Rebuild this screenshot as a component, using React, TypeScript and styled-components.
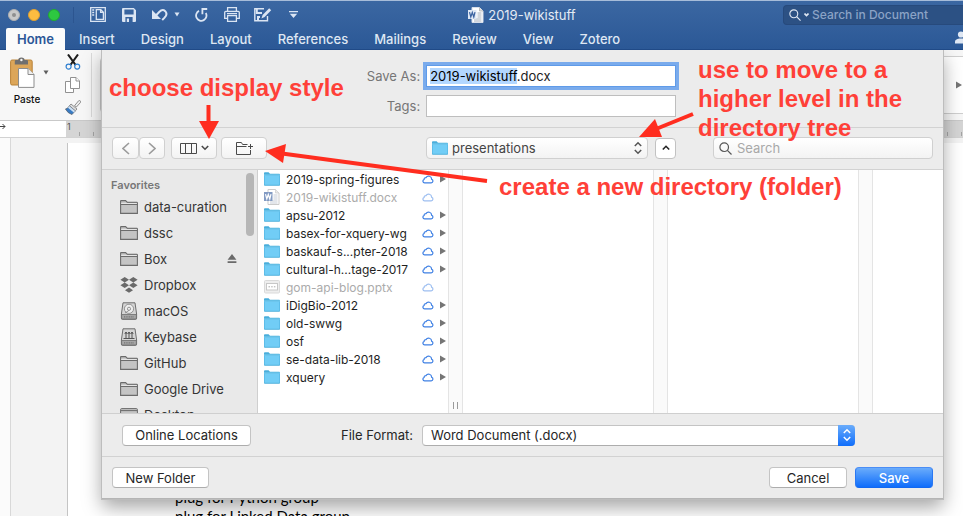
import React, { useEffect, useRef } from "react";
import styled, { createGlobalStyle, css } from "styled-components";

const GlobalStyle = createGlobalStyle`
  * { box-sizing: border-box; }
  body { margin: 0; background: #fff; font-family: Inter, "Liberation Sans", sans-serif; font-size: 13px; color: #262626; }
  button, input, select { font: inherit; color: inherit; margin: 0; }
  button { padding: 0; border: 0; background: none; }
  ul { list-style: none; margin: 0; padding: 0; }
  svg { display: block; flex: none; }
`;

/* ---------- window chrome ---------- */

const Window = styled.div`
  position: relative;
  height: 100vh;
  min-height: 516px;
  display: flex;
  flex-direction: column;
  overflow: hidden;
`;

const Header = styled.header`
  flex: none;
  border-top: 1px solid #a7bcd9;
  border-bottom: 1px solid #204a87;
  background: linear-gradient(#3b67a2, #2b5896);
  color: #dfe7f3;
`;

const TitleBar = styled.div`
  height: 27px;
  display: grid;
  grid-template-columns: minmax(0, 469fr) auto minmax(0, 388fr);
  align-items: center;
`;

const QuickTools = styled.div`
  display: flex;
  align-items: center;
  padding-left: 8px;
`;

const Light = styled.button<{ $color: string; $edge: string }>`
  width: 12px;
  height: 12px;
  margin-right: 8px;
  border-radius: 50%;
  border: 1px solid ${(p) => p.$edge};
  background: ${(p) => p.$color};
  display: grid;
  place-items: center;
`;

const LightDot = styled.span`
  width: 4px;
  height: 4px;
  border-radius: 50%;
  background: #8f8f8f;
`;

const Separator = styled.span`
  width: 1px;
  height: 16px;
  margin: 0 16px 0 5px;
  background: #2c5590;
`;

const ToolButton = styled.button<{ $gap: number }>`
  margin-right: ${(p) => p.$gap}px;
  color: #dbe5f3;
`;

const DocTitle = styled.h1`
  margin: 0;
  display: flex;
  align-items: center;
  gap: 4px;
  font-size: 13px;
  font-weight: 400;
  line-height: 16px;
  color: #e4ebf5;
`;

const DocSearch = styled.label`
  justify-self: end;
  width: 180px;
  height: 20px;
  display: flex;
  align-items: center;
  gap: 3px;
  padding-left: 5px;
  border-radius: 4px 0 0 4px;
  border: 1px solid #274a7c;
  border-right: 0;
  background: #2c5184;
`;

const DocSearchInput = styled.input`
  flex: 1;
  min-width: 0;
  border: 0;
  padding: 0;
  background: none;
  outline: 0;
  color: #dfe7f3;
  font-size: 12px;
  font-weight: 500;
  &::placeholder { color: #8ba3c6; opacity: 1; }
`;

const Tabs = styled.nav`
  height: 21px;
  display: flex;
  gap: 2px;
  padding-left: 6px;
`;

const Tab = styled.button<{ $active?: boolean }>`
  padding: 0 12px;
  font-weight: 500;
  line-height: 20px;
  color: #dfe7f3;
  ${(p) =>
    p.$active &&
    css`
      height: 22px;
      padding: 0 11px;
      background: #fbfbfb;
      color: #2b5797;
      font-weight: 600;
      border-radius: 2px 2px 0 0;
    `}
`;

const Share = styled.button`
  margin-left: auto;
  margin-right: -6px;
  padding-bottom: 2px;
`;

/* ---------- ribbon and document ---------- */

const Body = styled.div`
  position: relative;
  flex: 1;
  display: flex;
  flex-direction: column;
  background: #f3f3f3;
`;

const Ribbon = styled.div`
  flex: none;
  height: 71px;
  display: flex;
  border-bottom: 1px solid #c9c9c9;
  background: #f7f7f7;
`;

const Paste = styled.button`
  width: 54px;
  padding-top: 7px;
  display: flex;
  flex-direction: column;
  align-items: center;
  gap: 4px;
  font-size: 10px;
  font-weight: 500;
  line-height: 14px;
  color: #111;
`;

const PasteTop = styled.span`
  display: flex;
  align-items: center;
  gap: 8px;
  padding-left: 4px;
  color: #5e5e5e;
`;

const ClipTools = styled.div`
  width: 38px;
  display: flex;
  flex-direction: column;
  align-items: center;
  gap: 7px;
  padding-top: 1px;
  border-right: 1px solid #dadada;
  margin: 3px 8px 3px 0;
`;

const FontGroup = styled.div`
  flex: 1;
  margin: 7px 0;
  border: 1px solid #c8c8c8;
  border-radius: 4px;
  background: #fdfdfd;
`;

const StylesGallery = styled.div`
  flex: none;
  width: 30px;
  margin: 6px 0 6px 4px;
  display: flex;
  align-items: center;
  justify-content: flex-end;
  padding-right: 1px;
  border: 1px solid #cfcfcf;
  border-right: 0;
  background: #fff;
`;

const Ruler = styled.div`
  flex: none;
  height: 17px;
  display: flex;
  border-bottom: 1px solid #d2d2d2;
  background: #fff;
`;

const RulerStart = styled.div`
  width: 66px;
  padding-top: 1px;
`;

const RulerScale = styled.div`
  flex: 1;
  padding-left: 1px;
  font-size: 9px;
  line-height: 12px;
  color: #555;
  background: repeating-linear-gradient(90deg, transparent 0 13px, #a5a5a5 13px 14px) 0 11px / 100% 4px no-repeat, #d5d5d5;
`;

const Workspace = styled.div`
  flex: 1;
  min-height: 0;
  display: flex;
`;

const SideRuler = styled.div`
  width: 11px;
  border-right: 1px solid #d8d8d8;
  background: #fbfbfb;
`;

const Page = styled.article`
  flex: 1;
  margin: 5px 0 0 56px;
  padding: 345px 0 0 107px;
  overflow: hidden;
  border-left: 1px solid #c4c4c4;
  background: #fff;
  font-family: Lato, "Open Sans", sans-serif;
  font-size: 15px;
  line-height: 19px;
  color: #000;
`;

const Line = styled.p`
  margin: 0;
`;

/* ---------- save dialog ---------- */

const Dialog = styled.form`
  position: absolute;
  top: 0;
  left: 102px;
  right: 20px;
  display: flex;
  flex-direction: column;
  background: #ececec;
  border-bottom: 1px solid #b5b5b5;
  box-shadow: 0 0 0 1px #bdbdbd, 0 8px 18px rgba(0, 0, 0, 0.36);
  clip-path: inset(0 -40px -40px -40px);
`;

const Names = styled.div`
  display: grid;
  grid-template-columns: auto minmax(0, 250px);
  justify-content: center;
  align-items: center;
  gap: 8px 6px;
  padding: 15px 2px 10px 0;
  border-bottom: 1px solid #d2d2d2;
`;

const FieldLabel = styled.label`
  text-align: right;
  color: #767676;
`;

const Field = styled.input`
  width: 100%;
  height: 22px;
  padding: 0 3px;
  border: 1px solid #bebebe;
  border-radius: 0;
  background: #fff;
  outline: 0;
  color: #222;
  &::selection { background: #b3d7ff; color: #000; }
  &:focus { border-color: #5f9be9; box-shadow: 0 0 0 3px #7aabec; }
`;

const Toolbar = styled.div`
  display: grid;
  grid-template-columns: minmax(0, 314fr) minmax(0, 250fr) minmax(0, 257fr);
  align-items: center;
  padding: 9px 10px 10px;
  border-bottom: 1px solid #d2d2d2;
`;

const ToolGroup = styled.div`
  display: flex;
  align-items: center;
`;

const soft = css`
  height: 22px;
  border-radius: 4px;
  border: 1px solid #d0d0d0;
  background: linear-gradient(#fff, #f3f3f3);
`;

const SoftButton = styled.button<{ $width: number; $gap?: number }>`
  ${soft}
  width: ${(p) => p.$width}px;
  margin-right: ${(p) => p.$gap ?? 0}px;
  display: flex;
  align-items: center;
  justify-content: center;
  gap: 4px;
  color: #4a4a4a;
  &:disabled { color: #9b9b9b; }
`;

const PathBox = styled.div`
  ${soft}
  flex: 1;
  display: grid;
  grid-template-columns: 26px minmax(0, 1fr) 14px;
  align-items: center;
  padding-left: 5px;
  margin-right: 7px;
`;

const PlainSelect = styled.select`
  appearance: none;
  width: 100%;
  height: 20px;
  padding: 0;
  border: 0;
  outline: 0;
  background: none;
  color: #444;
  grid-row: 1;
  grid-column: 2;
`;

const PathSelect = styled(PlainSelect)`
  grid-column: 1 / -1;
  padding-left: 20px;
`;

const PathIcon = styled.span`
  grid-row: 1;
  grid-column: 1;
  pointer-events: none;
`;

const PathArrows = styled.span`
  grid-row: 1;
  grid-column: 3;
  color: #555;
  pointer-events: none;
`;

const UpButton = styled.button`
  width: 21px;
  height: 21px;
  border-radius: 4px;
  border: 1px solid #c2c2c2;
  background: #fff;
  display: grid;
  place-items: center;
`;

const FileSearch = styled.label`
  ${soft}
  justify-self: end;
  width: 220px;
  max-width: 100%;
  display: flex;
  align-items: center;
  gap: 5px;
  padding-left: 5px;
  color: #555;
`;

const FileSearchInput = styled.input`
  flex: 1;
  min-width: 0;
  border: 0;
  padding: 0;
  background: none;
  outline: 0;
  &::placeholder { color: #a8a8a8; opacity: 1; }
`;

const Browser = styled.div`
  height: 243px;
  display: flex;
  background: #fff;
`;

const Sidebar = styled.aside`
  flex: none;
  width: 156px;
  display: flex;
  overflow: hidden;
  border-right: 1px solid #cfcfcf;
  background: #e9e9e9;
`;

const Favorites = styled.section`
  flex: 1;
  min-width: 0;
`;

const SidebarHeading = styled.h2`
  margin: 0;
  padding: 8px 0 2px 9px;
  font-size: 11px;
  font-weight: 600;
  line-height: 14px;
  color: #777;
`;

const Place = styled.button`
  width: 100%;
  height: 26px;
  display: flex;
  align-items: center;
  gap: 6px;
  padding: 0 9px 0 18px;
  color: #353535;
  text-align: left;
`;

const PlaceName = styled.span`
  flex: 1;
  white-space: nowrap;
`;

const ScrollTrack = styled.div`
  width: 11px;
  padding-top: 3px;
`;

const ScrollThumb = styled.div`
  width: 8px;
  height: 63px;
  border-radius: 4px;
  background: #b6b6b6;
`;

const FileColumn = styled.ul`
  flex: none;
  width: 190px;
`;

const LastColumn = styled.div`
  flex: 1;
`;

const Divider = styled.div`
  flex: none;
  width: 15px;
  display: flex;
  align-items: flex-end;
  justify-content: center;
  padding-bottom: 4px;
  border: solid #e4e4e4;
  border-width: 0 1px;
  background: #fafafa;
`;

const FileRow = styled.button<{ $dim?: boolean }>`
  width: 100%;
  height: 18px;
  display: grid;
  grid-template-columns: 16px minmax(0, 1fr) 12px 6px;
  align-items: center;
  column-gap: 6px;
  padding: 0 2px 0 6px;
  text-align: left;
  font-size: 12px;
  color: ${(p) => (p.$dim ? "#ababab" : "#1f1f1f")};
`;

const FileName = styled.span`
  white-space: nowrap;
`;

const FormatBar = styled.div`
  height: 43px;
  display: flex;
  align-items: center;
  padding: 0 88px 0 20px;
  border-top: 1px solid #cfcfcf;
`;

const PushButton = styled.button<{ $width: number; $primary?: boolean }>`
  width: ${(p) => p.$width}px;
  height: 21px;
  border-radius: 4px;
  border: 1px solid #c4c4c4;
  border-bottom-color: #adadad;
  background: #fff;
  line-height: 18px;
  ${(p) =>
    p.$primary &&
    css`
      border-color: #4b8df5 #2a78f3 #1268f0;
      background: linear-gradient(#6aacfb, #0f6dfb);
      color: #fff;
      font-weight: 500;
    `}
`;

const FormatLabel = styled.label`
  margin-left: auto;
  margin-right: 9px;
`;

const FormatBox = styled.div`
  width: 433px;
  height: 21px;
  display: grid;
  grid-template-columns: minmax(0, 1fr) 17px;
  border: 1px solid #c4c4c4;
  border-bottom-color: #adadad;
  border-right: 0;
  border-radius: 4px;
  background: #fff;
`;

const FormatSelect = styled(PlainSelect)`
  grid-column: 1 / -1;
  height: 19px;
  padding-left: 8px;
  color: #262626;
`;

const FormatArrows = styled.span`
  grid-row: 1;
  grid-column: 2;
  margin: -1px 0;
  display: grid;
  place-items: center;
  border-radius: 0 4px 4px 0;
  background: linear-gradient(#6aacfb, #0f6dfb);
  color: #fff;
  pointer-events: none;
`;

const Actions = styled.div`
  height: 42px;
  display: flex;
  align-items: center;
  gap: 8px;
  padding: 0 10px;
  border-top: 1px solid #d2d2d2;
`;

const Spacer = styled.span`
  flex: 1;
`;

/* ---------- callouts ---------- */

const Arrows = styled.svg`
  position: absolute;
  top: 0;
  left: 0;
  pointer-events: none;
`;

const Callout = styled.p<{ $x: number; $y: number }>`
  position: absolute;
  left: ${(p) => p.$x}px;
  top: ${(p) => p.$y}px;
  margin: 0;
  font-family: "Liberation Sans", Arial, sans-serif;
  font-weight: 700;
  font-size: 24px;
  line-height: 29px;
  white-space: nowrap;
  color: #ff4038;
  pointer-events: none;
`;

/* ---------- icons ---------- */

const FolderBlue = () => (
  <svg width="16" height="14" viewBox="0 0 16 14">
    <path d="M0 1.2Q0 .3 .9 .3H4.600L6 1.8H15.200Q16 1.8 16 2.6V13Q16 13.700 15.200 13.700H.8Q0 13.700 0 13Z" fill="#4aaedb" />
    <path d="M.5 3.600H15.500V12.800H.5Z" fill="#71cdf6" />
    <path d="M0 3H16" stroke="#93dcfa" strokeWidth=".7" />
  </svg>
);

const WordDoc = ({ dim }: { dim?: boolean }) => (
  <svg width="16" height="16" viewBox="0 0 16 16" opacity={dim ? 0.6 : 1}>
    <path d="M4 .5H11.500L15 4V15.500H4Z" fill="#fff" stroke={dim ? "#aaa" : "#d7deea"} />
    <path d="M11.500 .5V4H15" fill="#ddd" stroke="#aaa" strokeWidth=".7" />
    <path d="M9.500 6H13.500M9.500 8H13.500M9.500 10H13.500M6 12H13.500M6 14H13.500" stroke="#8d99ab" strokeWidth=".8" />
    <path d="M0 3H8.500V12H0Z" fill={dim ? "#31599c" : "#dfe7f4"} />
    <path d="M1.500 5.200L2.800 10L4.300 5.500L5.800 10L7 5.200" fill="none" stroke={dim ? "#fff" : "#3b62a0"} strokeWidth="1.2" />
  </svg>
);

const Slides = () => (
  <svg width="16" height="14" viewBox="0 0 16 14">
    <rect x=".5" y=".5" width="15" height="12.5" rx="1" fill="#eee" stroke="#dadada" />
    <rect x="2.5" y="3.5" width="11" height="6.5" fill="#fff" stroke="#c7c7c7" />
    <path d="M4.500 6.800H11.500" stroke="#aaa" strokeDasharray="1.5 1.2" />
  </svg>
);

const Cloud = ({ dim }: { dim?: boolean }) => (
  <svg width="12" height="9" viewBox="0 0 12 9" opacity={dim ? 0.5 : 1}>
    <path d="M2.600 7.900H9.200A1.9 1.9 0 0 0 9.600 4.200A3 3 0 0 0 4 2.600A1.7 1.7 0 0 0 2.100 4.500A1.75 1.75 0 0 0 2.600 7.900Z" fill="#fff" stroke="#3f80e4" strokeWidth="1.2" />
  </svg>
);

const Play = () => (
  <svg width="6" height="8" viewBox="0 0 6 8">
    <path d="M0 .6L6 4L0 7.400Z" fill="#757575" />
  </svg>
);

const FolderGray = () => (
  <svg width="18" height="14" viewBox="0 0 18 14">
    <path d="M.6 13.400V1.200Q.6 .6 1.200 .6H5.600L7.400 2.400H16.800Q17.400 2.400 17.400 3V13.400Z" fill="#c4c4c4" stroke="#6b6b6b" strokeWidth="1.1" />
    <path d="M1.200 3.400H16.800" stroke="#e9e9e9" />
    <path d="M.6 4.500H17.400" stroke="#6b6b6b" />
  </svg>
);

const DropboxMark = () => (
  <svg width="18" height="16" viewBox="0 0 18 16" fill="#6a6a6a">
    <path d="M4.700 0L9 2.700L4.700 5.400L.4 2.700ZM13.300 0L17.600 2.700L13.300 5.400L9 2.700ZM4.700 5.600L9 8.300L4.700 11L.4 8.300ZM13.300 5.600L17.600 8.300L13.300 11L9 8.300ZM9 10.600L13 13.200L9 15.800L5 13.200Z" />
  </svg>
);

const Drive = ({ network }: { network?: boolean }) => (
  <svg width="18" height="18" viewBox="0 0 18 18">
    <path d="M3 .8H15L16.600 12V16.200Q16.600 17.300 15.500 17.300H2.500Q1.400 17.300 1.400 16.200V12Z" fill="#d5d5d5" stroke="#6d6d6d" />
    <path d="M1.600 12.500H16.400V17H1.600Z" fill="#a6a6a6" stroke="#6d6d6d" strokeWidth=".8" />
    <path d="M4 14.800H14" stroke="#747474" strokeWidth="1.2" strokeDasharray="1 .7" />
    {network ? (
      <path d="M3.500 10.500H14.500M6 10V4M9 10V4M12 10V4M4.800 6L6 4L7.200 6M7.800 6L9 4L10.200 6M10.800 6L12 4L13.200 6" fill="none" stroke="#555" strokeWidth="1" />
    ) : (
      <g fill="#eee" stroke="#8a8a8a" strokeWidth=".9">
        <circle cx="9" cy="6.8" r="4.6" />
        <circle cx="9" cy="6.8" r="1.6" />
        <path d="M9 8.400L5 11" />
      </g>
    )}
  </svg>
);

const Desktop = () => (
  <svg width="18" height="14" viewBox="0 0 18 14">
    <rect x=".6" y=".6" width="16.8" height="12.8" rx="1" fill="#c4c4c4" stroke="#6b6b6b" />
    <path d="M1 2.600H17" stroke="#6b6b6b" />
  </svg>
);

const Eject = () => (
  <svg width="10" height="10" viewBox="0 0 10 10" fill="#6a6a6a">
    <path d="M5 0L9.400 5.800H.6ZM.6 7.200H9.400V9H.6Z" />
  </svg>
);

const UpDown = () => (
  <svg width="10" height="14" viewBox="0 0 10 14" fill="none" stroke="currentColor" strokeWidth="1.5">
    <path d="M1.800 5L5 1.800L8.200 5M1.800 9L5 12.200L8.200 9" />
  </svg>
);

const Magnifier = ({ size }: { size: number }) => (
  <svg width={size} height={size} viewBox="0 0 13 13" fill="none" stroke="currentColor" strokeWidth="1.2">
    <circle cx="5.2" cy="5.2" r="4.3" />
    <path d="M8.400 8.400L12.500 12.500" />
  </svg>
);

const Caret = () => (
  <svg width="6" height="5" viewBox="0 0 6 5">
    <path d="M.5 .5H5.500L3 4.500Z" fill="currentColor" />
  </svg>
);

const Chevron = ({ d, w, h }: { d: string; w: number; h: number }) => (
  <svg width={w} height={h} viewBox={`0 0 ${w} ${h}`} fill="none" stroke="currentColor" strokeWidth="1.6">
    <path d={d} />
  </svg>
);

const PanelIcon = () => (
  <svg width="16" height="15" viewBox="0 0 16 15" fill="none" stroke="currentColor" strokeWidth="1.3">
    <path d="M.7 .7H15.300V14.300H.7Z" />
    <path d="M2.200 3H4.200M2.200 5.500H4.200M2.200 8H4.200" />
    <path d="M6.300 2.600H10.800L13.400 5.200V12.400H6.300ZM10.600 2.600V5.400H13.400" />
  </svg>
);

const SaveIcon = () => (
  <svg width="14" height="14" viewBox="0 0 14 14">
    <path d="M1 0H11.800L14 2.200V13Q14 14 13 14H1Q0 14 0 13V1Q0 0 1 0ZM2.400 1.500V6.400H11.600V1.500ZM3.400 9V14H10.600V9Z" fill="currentColor" fillRule="evenodd" />
    <path d="M4.800 10.500H7V14H4.800Z" fill="currentColor" />
  </svg>
);

const UndoIcon = () => (
  <svg width="16" height="13" viewBox="0 0 16 13" fill="none" stroke="currentColor">
    <path d="M3 8.500L7.200 4Q10.500 .6 13.200 3.200Q16 6.400 12.600 9.600L10.200 12" strokeWidth="2" />
    <path d="M0 2V11H9Z" fill="currentColor" stroke="none" />
  </svg>
);

const RedoIcon = () => (
  <svg width="13" height="14" viewBox="0 0 13 14" fill="none" stroke="currentColor" strokeWidth="1.8">
    <path d="M4 2.900A5.2 5.2 0 1 0 10.800 5" />
    <path d="M12.200 1H7.400V6.200" />
  </svg>
);

const PrintIcon = () => (
  <svg width="16" height="15" viewBox="0 0 16 15" fill="none" stroke="currentColor" strokeWidth="1.3">
    <path d="M3.600 4V.7H12.400V4" />
    <path d="M3.400 11.400H.7V5.400Q.7 4.400 1.700 4.400H14.300Q15.300 4.400 15.300 5.400V11.400H12.600" />
    <path d="M3.600 8.600H12.400V14.300H3.600Z" />
    <path d="M3 6.600H13" />
  </svg>
);

const EditIcon = () => (
  <svg width="18" height="15" viewBox="0 0 18 15" fill="none" stroke="currentColor" strokeWidth="1.4">
    <path d="M10 1.700H.8V13.800H13.500V9" />
    <path d="M2.800 2V6H8" strokeWidth="2" />
    <path d="M4 13V10H6" strokeWidth="2" />
    <path d="M7.500 11.400L8.600 8L15.200 1.200L17.200 3.200L10.600 10Z" fill="currentColor" stroke="none" />
  </svg>
);

const MoreIcon = () => (
  <svg width="9" height="7" viewBox="0 0 9 7" fill="currentColor">
    <path d="M0 0H9V1.300H0ZM.8 2.800H8.200L4.500 7Z" />
  </svg>
);

const PersonIcon = () => (
  <svg width="14" height="13" viewBox="0 0 14 13" fill="#dfe7f3">
    <circle cx="6" cy="3.5" r="3.1" />
    <path d="M0 12.500V10.500Q0 8.400 4.300 7.600H7.700Q12 8.400 12 10.500V12.500Z" />
  </svg>
);

const ClipboardIcon = () => (
  <svg width="25" height="31" viewBox="0 0 25 31">
    <rect x=".6" y="3" width="21.6" height="25" rx="1.5" fill="#dca659" stroke="#b98338" />
    <path d="M4.800 7.400V4Q4.800 3.200 6 3H8.200Q8.200 .4 11.400 .4Q14.600 .4 14.600 3H16.800Q18 3.200 18 4V7.400Z" fill="#6f6f6f" />
    <circle cx="11.4" cy="3" r="1.2" fill="#f7f7f7" />
    <path d="M8.500 11.500H18L24 17.500V30.400H8.500Z" fill="#fff" stroke="#8d8d8d" />
    <path d="M18 11.500V17.500H24" fill="#eee" stroke="#8d8d8d" />
  </svg>
);

const ScissorsIcon = () => (
  <svg width="16" height="16" viewBox="0 0 16 16" fill="none">
    <path d="M3 .5L10.600 11M13 .5L5.400 11" stroke="#1c1c1c" strokeWidth="2.1" />
    <circle cx="3.6" cy="12.6" r="2.5" stroke="#2f7fd0" strokeWidth="1.2" />
    <circle cx="12.2" cy="12.6" r="2.5" stroke="#2f7fd0" strokeWidth="1.2" />
  </svg>
);

const CopyIcon = () => (
  <svg width="15" height="16" viewBox="0 0 15 16" fill="#fff" stroke="#919191">
    <path d="M.5 4.500H6L8.500 7V15.500H.5Z" />
    <path d="M5.500 .5H11L14.500 4V11.500H5.500Z" />
    <path d="M11 .5V4H14.500" />
  </svg>
);

const BrushIcon = () => (
  <svg width="16" height="15" viewBox="0 0 16 15">
    <path d="M9.600 5.600L13.600 .8Q15 0 15.600 1.200Q16 2 15.200 2.800L11.400 7Z" fill="#eee" stroke="#777" strokeWidth=".8" />
    <path d="M6 4L12 9L10.400 10.800L4.400 5.800Z" fill="#ddd" stroke="#777" strokeWidth=".8" />
    <path d="M4.200 6L10.200 11L7 14.600Q3 13.600 .4 9Q3 8.600 4.200 6Z" fill="#3a7cc4" stroke="#555" strokeWidth=".6" />
    <path d="M4.200 6L10.200 11L8.800 12.400L3 7.800Z" fill="#cfe0f2" />
  </svg>
);

const ColumnsIcon = () => (
  <svg width="17" height="11" viewBox="0 0 17 11" fill="none" stroke="currentColor">
    <path d="M.5 .5H16.500V10.500H.5ZM5.500 .5V10.500M11.500 .5V10.500" />
  </svg>
);

const NewFolderIcon = () => (
  <svg width="17" height="13" viewBox="0 0 17 13" fill="none" stroke="currentColor">
    <path d="M11.500 2.500H6.600L5.400 .5H.5V12.500H14.500V8" />
    <path d="M.5 4.500H10.500M14.500 2V7M12 4.500H17" />
  </svg>
);

const Grip = () => (
  <svg width="5" height="7" viewBox="0 0 5 7">
    <path d="M.5 0V7M4.500 0V7" stroke="#9a9a9a" />
  </svg>
);

/* ---------- data ---------- */

const tabs = ["Home", "Insert", "Design", "Layout", "References", "Mailings", "Review", "View", "Zotero"];

const places = [
  { name: "data-curation", icon: <FolderGray /> },
  { name: "dssc", icon: <FolderGray /> },
  { name: "Box", icon: <FolderGray />, eject: true },
  { name: "Dropbox", icon: <DropboxMark /> },
  { name: "macOS", icon: <Drive /> },
  { name: "Keybase", icon: <Drive network /> },
  { name: "GitHub", icon: <FolderGray /> },
  { name: "Google Drive", icon: <FolderGray /> },
  { name: "Desktop", icon: <Desktop /> },
];

type Entry = { name: string; kind?: "word" | "slides" };

const files: Entry[] = [
  { name: "2019-spring-figures" },
  { name: "2019-wikistuff.docx", kind: "word" },
  { name: "apsu-2012" },
  { name: "basex-for-xquery-wg" },
  { name: "baskauf-s...pter-2018" },
  { name: "cultural-h...tage-2017" },
  { name: "gom-api-blog.pptx", kind: "slides" },
  { name: "iDigBio-2012" },
  { name: "old-swwg" },
  { name: "osf" },
  { name: "se-data-lib-2018" },
  { name: "xquery" },
];

const FileEntry = ({ name, kind }: Entry) => (
  <li>
    <FileRow type="button" $dim={!!kind}>
      {kind === "word" ? <WordDoc dim /> : kind === "slides" ? <Slides /> : <FolderBlue />}
      <FileName>{name}</FileName>
      <Cloud dim={!!kind} />
      {!kind && <Play />}
    </FileRow>
  </li>
);

export default function App() {
  const nameRef = useRef<HTMLInputElement>(null);

  useEffect(() => {
    const input = nameRef.current;
    if (!input) return;
    input.focus();
    input.setSelectionRange(0, input.value.lastIndexOf("."));
  }, []);

  return (
    <Window>
      <GlobalStyle />
      <Header>
        <TitleBar>
          <QuickTools>
            <Light aria-label="Close" $color="#c9c9c9" $edge="#b0b0b0"><LightDot /></Light>
            <Light aria-label="Minimize" $color="#fdbc40" $edge="#e0a030" />
            <Light aria-label="Zoom" $color="#2dc840" $edge="#20a930" />
            <Separator />
            <ToolButton aria-label="Navigation pane" $gap={16}><PanelIcon /></ToolButton>
            <ToolButton aria-label="Save document" $gap={16}><SaveIcon /></ToolButton>
            <ToolButton aria-label="Undo" $gap={6}><UndoIcon /></ToolButton>
            <ToolButton aria-label="Undo history" $gap={15}><Caret /></ToolButton>
            <ToolButton aria-label="Repeat" $gap={16}><RedoIcon /></ToolButton>
            <ToolButton aria-label="Print" $gap={14}><PrintIcon /></ToolButton>
            <ToolButton aria-label="Edit" $gap={17}><EditIcon /></ToolButton>
            <ToolButton aria-label="Customize toolbar" $gap={0}><MoreIcon /></ToolButton>
          </QuickTools>
          <DocTitle><WordDoc />2019-wikistuff</DocTitle>
          <DocSearch>
            <Magnifier size={12} />
            <Chevron d="M.5 .5L2.500 2.500L4.500 .5" w={5} h={4} />
            <DocSearchInput aria-label="Search in Document" placeholder="Search in Document" />
          </DocSearch>
        </TitleBar>
        <Tabs>
          {tabs.map((t, i) => (
            <Tab key={t} $active={i === 0}>{t}</Tab>
          ))}
          <Share aria-label="Share"><PersonIcon /></Share>
        </Tabs>
      </Header>

      <Body>
        <Ribbon>
          <Paste>
            <PasteTop><ClipboardIcon /><Caret /></PasteTop>
            Paste
          </Paste>
          <ClipTools>
            <button aria-label="Cut"><ScissorsIcon /></button>
            <button aria-label="Copy"><CopyIcon /></button>
            <button aria-label="Format painter"><BrushIcon /></button>
          </ClipTools>
          <FontGroup />
          <StylesGallery><Play /></StylesGallery>
        </Ribbon>
        <Ruler>
          <RulerStart>
            <svg width="6" height="8" viewBox="0 0 6 8" fill="none" stroke="#444">
              <path d="M0 4.500H5M2.500 2L5 4.500L2.500 7" />
            </svg>
          </RulerStart>
          <RulerScale>1</RulerScale>
        </Ruler>
        <Workspace>
          <SideRuler />
          <Page>
            <Line>plug for Python group</Line>
            <Line>plug for Linked Data group</Line>
          </Page>
        </Workspace>

        <Dialog role="dialog" aria-label="Save" onSubmit={(e) => e.preventDefault()}>
          <Names>
            <FieldLabel htmlFor="name">Save As:</FieldLabel>
            <Field id="name" ref={nameRef} defaultValue="2019-wikistuff.docx" spellCheck={false} />
            <FieldLabel htmlFor="tags">Tags:</FieldLabel>
            <Field id="tags" />
          </Names>

          <Toolbar>
            <ToolGroup>
              <SoftButton type="button" aria-label="Back" $width={27} disabled>
                <Chevron d="M7 1L1 6.500L7 12" w={8} h={13} />
              </SoftButton>
              <SoftButton type="button" aria-label="Forward" $width={26} $gap={6} disabled>
                <Chevron d="M1 1L7 6.500L1 12" w={8} h={13} />
              </SoftButton>
              <SoftButton type="button" aria-label="Display style" $width={46} $gap={4}>
                <ColumnsIcon />
                <Chevron d="M.8 1L4 4.200L7.200 1" w={8} h={6} />
              </SoftButton>
              <SoftButton type="button" aria-label="Create folder" $width={46}>
                <NewFolderIcon />
              </SoftButton>
            </ToolGroup>
            <ToolGroup>
              <PathBox>
                <PathSelect aria-label="Folder">
                  <option>presentations</option>
                </PathSelect>
                <PathIcon><FolderBlue /></PathIcon>
                <PathArrows><UpDown /></PathArrows>
              </PathBox>
              <UpButton type="button" aria-label="Collapse">
                <Chevron d="M.8 4.500L4 1.300L7.200 4.500" w={8} h={6} />
              </UpButton>
            </ToolGroup>
            <FileSearch>
              <Magnifier size={13} />
              <FileSearchInput aria-label="Search" placeholder="Search" />
            </FileSearch>
          </Toolbar>

          <Browser>
            <Sidebar>
              <Favorites>
                <SidebarHeading>Favorites</SidebarHeading>
                <ul>
                  {places.map((p) => (
                    <li key={p.name}>
                      <Place type="button">
                        {p.icon}
                        <PlaceName>{p.name}</PlaceName>
                        {p.eject && <Eject />}
                      </Place>
                    </li>
                  ))}
                </ul>
              </Favorites>
              <ScrollTrack><ScrollThumb /></ScrollTrack>
            </Sidebar>
            <FileColumn>
              {files.map((f) => <FileEntry key={f.name} {...f} />)}
            </FileColumn>
            <Divider><Grip /></Divider>
            <FileColumn />
            <Divider />
            <FileColumn />
            <Divider />
            <LastColumn />
          </Browser>

          <FormatBar>
            <PushButton type="button" $width={129}>Online Locations</PushButton>
            <FormatLabel htmlFor="format">File Format:</FormatLabel>
            <FormatBox>
              <FormatSelect id="format">
                <option>Word Document (.docx)</option>
              </FormatSelect>
              <FormatArrows><UpDown /></FormatArrows>
            </FormatBox>
          </FormatBar>

          <Actions>
            <PushButton type="button" $width={97}>New Folder</PushButton>
            <Spacer />
            <PushButton type="button" $width={78}>Cancel</PushButton>
            <PushButton type="submit" $width={78} $primary>Save</PushButton>
          </Actions>
        </Dialog>
      </Body>

      <Arrows width="963" height="516" viewBox="0 0 963 516" aria-hidden="true">
        <g fill="#ff2d1f" stroke="none">
          <path d="M199 121H219L209 139Z" />
          <path d="M639 137L655 119L662 137Z" />
          <path d="M265 151L286 144L283 163Z" />
        </g>
        <g stroke="#ff2d1f" strokeWidth="4" fill="none">
          <path d="M208.500 105V123" />
          <path d="M656 129L693 114" />
          <path d="M282 153.500L487 181" />
        </g>
      </Arrows>
      <Callout $x={109} $y={73}>choose display style</Callout>
      <Callout $x={698} $y={55}>
        use to move to a<br />higher level in the<br />directory tree
      </Callout>
      <Callout $x={499} $y={172}>create a new directory (folder)</Callout>
    </Window>
  );
}
